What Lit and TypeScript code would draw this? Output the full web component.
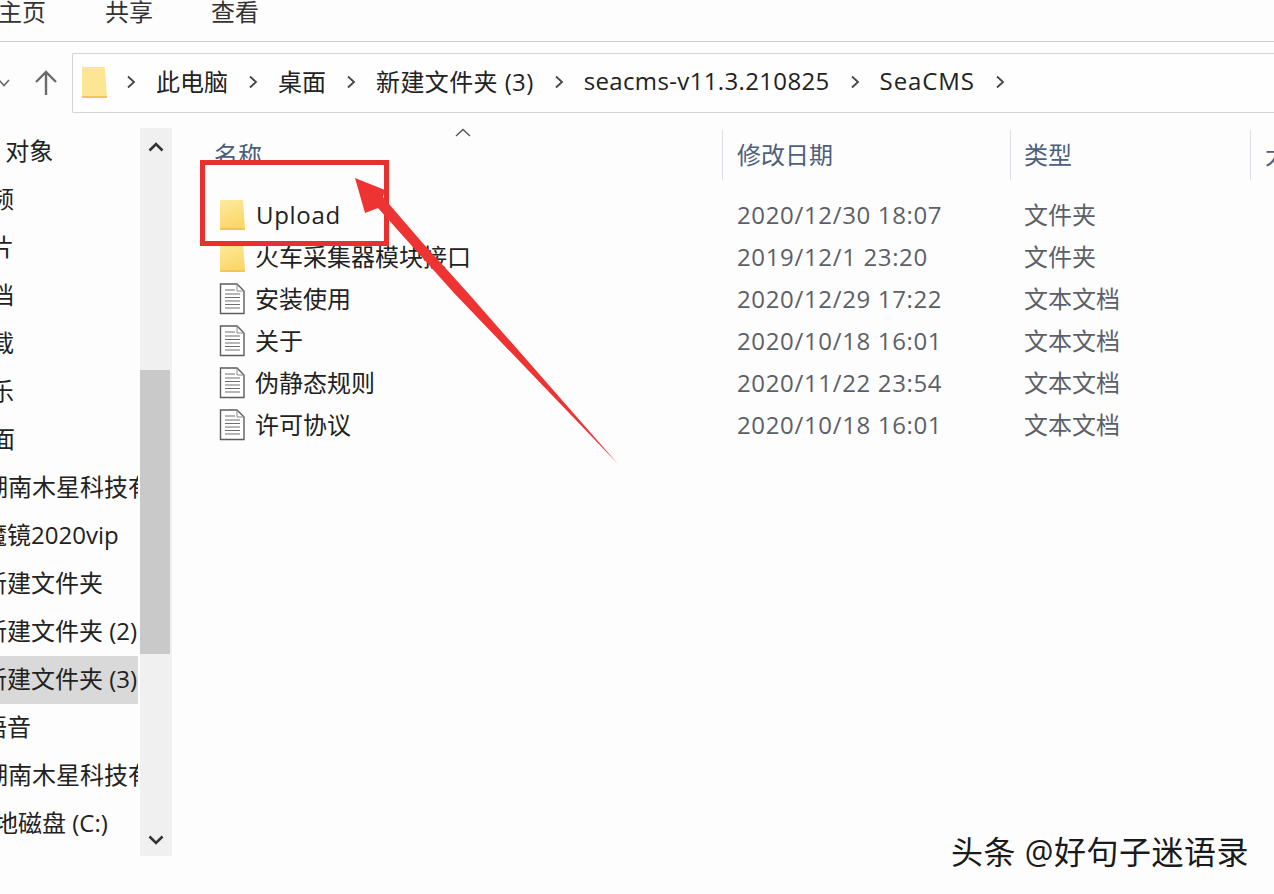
import { LitElement, html, css, svg } from "lit";
import { customElement } from "lit/decorators.js";

const navItems: [string, number, boolean?][] = [
  ["3D 对象", -32],
  ["视频", -34],
  ["图片", -34],
  ["文档", -34],
  ["下载", -34],
  ["音乐", -34],
  ["桌面", -33],
  ["湖南木星科技有限公司", -16],
  ["魔镜2020vip", -17],
  ["新建文件夹", -17],
  ["新建文件夹 (2)", -17],
  ["新建文件夹 (3)", -17, true],
  ["语音", -17],
  ["湖南木星科技有限公司", -16],
  ["本地磁盘 (C:)", -30],
];

const crumbs: [string, string][] = [
  ["此电脑", ""],
  ["桌面", ""],
  ["新建文件夹 (3)", "l1"],
  ["seacms-v11.3.210825", "l2"],
  ["SeaCMS", "l3"],
];

const files: [string, string, string, "folder" | "doc"][] = [
  ["Upload", "2020/12/30 18:07", "文件夹", "folder"],
  ["火车采集器模块接口", "2019/12/1 23:20", "文件夹", "folder"],
  ["安装使用", "2020/12/29 17:22", "文本文档", "doc"],
  ["关于", "2020/10/18 16:01", "文本文档", "doc"],
  ["伪静态规则", "2020/11/22 23:54", "文本文档", "doc"],
  ["许可协议", "2020/10/18 16:01", "文本文档", "doc"],
];

const folderIcon = html`<svg class="ficon" viewBox="0 0 27 32" width="27" height="32">
  <defs><linearGradient id="fg" x1="0" y1="0" x2="0.3" y2="1">
    <stop offset="0" stop-color="#fdeaa0"/><stop offset="1" stop-color="#fbd768"/></linearGradient></defs>
  <path d="M1 1H24L26 30.5H1Z" fill="url(#fg)"/>
  <path d="M1 29H26V31H1Z" fill="#f0c65a"/>
</svg>`;

const docIcon = html`<svg class="ficon" viewBox="0 0 27 32" width="27" height="32">
  <path d="M1.5 1H18L25 8V30.5H1.5Z" fill="#fff" stroke="#5c5c5c" stroke-width="1.4"/>
  <path d="M18 1V8H25" fill="none" stroke="#8a8a8a" stroke-width="1"/>
  <path d="M6 7H16M6 11H21M6 14.5H21M6 18H21M6 21.5H21M6 25H21" stroke="#6e6e6e" stroke-width="1.2"/>
</svg>`;

const chevron = html`<svg class="chev" viewBox="0 0 10 14" width="10" height="14">
  <path d="M2 1.5L8 7L2 12.5" fill="none" stroke="#444" stroke-width="1.8"/></svg>`;

@customElement("app-root")
export class AppRoot extends LitElement {
  static styles = css`
    :host {
      display: block;
      position: relative;
      width: 1274px;
      height: 894px;
      overflow: hidden;
      background: #fdfdfd;
      color: #1c1c1c;
      font-family: "Open Sans", "Noto Sans CJK SC", sans-serif;
      font-size: 24px;
    }
    .tabs {
      display: flex;
      height: 41px;
      border-bottom: 1px solid #cfcfcf;
      box-sizing: content-box;
      gap: 59px;
      line-height: 24px;
      color: #333;
    }
    .tabs span:first-child { margin-left: -2px; }
    .tabs span:nth-child(3) { margin-left: -1px; }
    .navrow {
      display: flex;
      align-items: center;
      height: 60px;
      margin-top: 11px;
    }
    .navbtns {
      width: 72px;
      flex: none;
      display: flex;
      align-items: center;
      justify-content: space-between;
      padding-right: 14px;
      box-sizing: border-box;
      overflow: hidden;
    }
    .down { margin-left: -2px; }
    .addr {
      flex: 1;
      height: 60px;
      box-sizing: border-box;
      border: 1px solid #d4d4d4;
      border-right: none;
      border-radius: 2px 0 0 2px;
      display: flex;
      align-items: center;
      padding-left: 8px;
      padding-bottom: 2px;
      gap: 20px;
      white-space: nowrap;
      background: #fefefe;
    }
    .addr .afolder { margin-right: -2px; }
    .addr .crumb { color: #222; margin-bottom: 4px; }
    .addr .l1 { letter-spacing: 0.4px; }
    .addr .l2 { letter-spacing: 0.35px; }
    .addr .l3 { letter-spacing: 0.9px; }
    .body {
      display: grid;
      grid-template-columns: 140px 32px 1fr;
      margin-top: 15px;
    }
    .side { overflow: hidden; width: 138px; height: 728px; }
    .nav {
      height: 48px;
      line-height: 46px;
      white-space: nowrap;
      color: #222;
    }
    .nav.sel { background: #d9d9d9; }
    .sbar {
      height: 728px;
      background: #f0f0f0;
      display: flex;
      flex-direction: column;
      align-items: center;
      justify-content: space-between;
      position: relative;
    }
    .sbtn { display: flex; align-items: center; justify-content: center; padding: 14px 0 11px; }
    .sbtn.dn { padding: 8px 0 11px; }
    .thumb {
      position: absolute;
      left: 0;
      right: 2px;
      top: 242px;
      height: 284px;
      background: #c9c9c9;
    }
    .main { min-width: 0; }
    .cols {
      display: grid;
      grid-template-columns: 550px 288px 240px 1fr;
    }
    .head {
      height: 50px;
      margin-top: 2px;
      margin-bottom: 14px;
      color: #4d5f7c;
      position: relative;
    }
    .hc {
      height: 50px;
      line-height: 50px;
      border-left: 1px solid #dbe0e6;
      padding-left: 14px;
      white-space: nowrap;
      overflow: hidden;
      box-sizing: border-box;
    }
    .hc.name { border-left: none; padding-left: 42px; height: 30px; }
    .hc.type { padding-left: 13px; }
    .sort { position: absolute; left: 283px; top: -2px; }
    .row { height: 42px; line-height: 42px; color: #5c5f68; }
    .fname {
      display: flex;
      align-items: center;
      gap: 9px;
      padding-left: 47px;
      color: #222;
      white-space: nowrap;
    }
    .fname .latin { letter-spacing: 0.7px; margin-left: 1px; }
    .cell { padding-left: 15px; white-space: nowrap; }
    .cell.when { letter-spacing: 0.65px; }
    .cell.kind { padding-left: 14px; }
    .overlay { position: absolute; left: 0; top: 0; pointer-events: none; }
    .mark {
      position: absolute;
      left: 951px;
      top: 830px;
      font-size: 32px;
      line-height: 44px;
      letter-spacing: 0.5px;
      white-space: nowrap;
      color: #1a1a1a;
      text-shadow: 1px 1px 0 #fff;
    }
  `;

  render() {
    return html`
      <div class="tabs"><span>主页</span><span>共享</span><span>查看</span></div>
      <div class="navrow">
        <div class="navbtns">
          <svg class="down" viewBox="0 0 12 10" width="12" height="10"><path d="M1 2L6 7.5L11 2" fill="none" stroke="#666" stroke-width="1.6"/></svg>
          <svg viewBox="0 0 24 26" width="24" height="26"><path d="M12 25V2M2 12L12 2L22 12" fill="none" stroke="#6b6b6b" stroke-width="2.4"/></svg>
        </div>
        <div class="addr">
          <svg class="afolder" viewBox="0 0 27 33" width="27" height="33">
            <path d="M1 1H24L26 31.5H1Z" fill="#fce593"/><path d="M1 30H26V32H1Z" fill="#f0c65a"/>
          </svg>
          ${crumbs.map(
            ([c, k]) => html`${chevron}<span class="crumb ${k}">${c}</span>`
          )}
          ${chevron}
        </div>
      </div>
      <div class="body">
        <div class="side">
          ${navItems.map(
            ([t, off, sel]) => html`<div class="nav ${sel ? "sel" : ""}"><span style="margin-left:${off}px">${t}</span></div>`
          )}
        </div>
        <div class="sbar">
          <div class="thumb"></div>
          <div class="sbtn"><svg viewBox="0 0 16 10" width="16" height="10"><path d="M1.5 8.5L8 2L14.5 8.5" fill="none" stroke="#333" stroke-width="2.6"/></svg></div>
          <div class="sbtn dn"><svg viewBox="0 0 16 10" width="16" height="10"><path d="M1.5 1.5L8 8L14.5 1.5" fill="none" stroke="#333" stroke-width="2.6"/></svg></div>
        </div>
        <div class="main">
          <div class="cols head">
            <div class="hc name">名称</div>
            <div class="hc">修改日期</div>
            <div class="hc type">类型</div>
            <div class="hc">大小</div>
            <svg class="sort" viewBox="0 0 16 9" width="16" height="9"><path d="M1 8L8 1.5L15 8" fill="none" stroke="#555" stroke-width="1.4"/></svg>
          </div>
          ${files.map(
            ([n, d, t, k]) => html`<div class="cols row">
              <div class="fname">${k === "folder" ? folderIcon : docIcon}<span class="${n === "Upload" ? "latin" : ""}">${n}</span></div>
              <div class="cell when">${d}</div>
              <div class="cell kind">${t}</div>
            </div>`
          )}
        </div>
      </div>
      <svg class="overlay" width="1274" height="894" viewBox="0 0 1274 894">
        ${svg`<rect x="202.5" y="162.5" width="184" height="81" fill="none" stroke="#e8312f" stroke-width="5"/>
        <path d="M355 178L385 190L383 197L420 240L468 293L618 464L454 293L378 208L365 213Z" fill="#ee3333"/>`}
      </svg>
      <div class="mark">头条 @好句子迷语录</div>
    `;
  }
}
